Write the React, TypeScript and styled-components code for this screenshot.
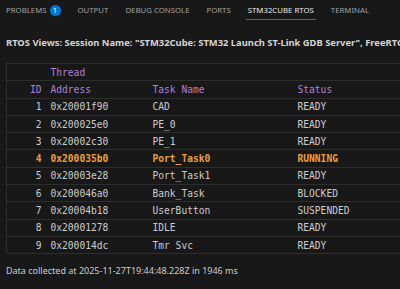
import styled, { createGlobalStyle } from "styled-components";

const GlobalStyle = createGlobalStyle`
  html, body {
    margin: 0;
    padding: 0;
    background: #181818;
  }
`;

type Thread = {
  id: number;
  address: string;
  name: string;
  status: string;
};

const THREADS: Thread[] = [
  { id: 1, address: "0x20001f90", name: "CAD", status: "READY" },
  { id: 2, address: "0x200025e0", name: "PE_0", status: "READY" },
  { id: 3, address: "0x20002c30", name: "PE_1", status: "READY" },
  { id: 4, address: "0x200035b0", name: "Port_Task0", status: "RUNNING" },
  { id: 5, address: "0x20003e28", name: "Port_Task1", status: "READY" },
  { id: 6, address: "0x200046a0", name: "Bank_Task", status: "BLOCKED" },
  { id: 7, address: "0x20004b18", name: "UserButton", status: "SUSPENDED" },
  { id: 8, address: "0x20001278", name: "IDLE", status: "READY" },
  { id: 9, address: "0x200014dc", name: "Tmr Svc", status: "READY" },
];

const TABS = ["PROBLEMS", "OUTPUT", "DEBUG CONSOLE", "PORTS", "STM32CUBE RTOS", "TERMINAL"];

const Panel = styled.div`
  width: 400px;
  height: 289px;
  overflow: hidden;
  background: #181818;
  font-family: "Noto Sans", "Open Sans", sans-serif;
  color: #cccccc;
`;

const TabBar = styled.div`
  display: flex;
  align-items: stretch;
  height: 24px;
  padding-left: 4px;
`;

const Tab = styled.div<{ $active?: boolean }>`
  display: flex;
  flex-shrink: 0;
  align-items: center;
  gap: 3px;
  padding: 0 2px;
  margin-right: 13px;
  font-size: 7.8px;
  white-space: nowrap;
  color: ${p => (p.$active ? "#e7e7e7" : "#a0a0a0")};
  box-shadow: ${p => (p.$active ? "inset 0 -1px 0 #0078d4" : "none")};
  height: 20px;
`;

const Badge = styled.span`
  display: inline-flex;
  align-items: center;
  justify-content: center;
  width: 11px;
  height: 11px;
  border-radius: 50%;
  background: #0078d4;
  color: #ffffff;
  font-size: 7.5px;
`;

const Title = styled.div`
  padding: 12px 0 0 6px;
  height: 14px;
  line-height: 14px;
  font-size: 9.4px;
  font-weight: 700;
  white-space: nowrap;
  color: #d4d4d4;
`;

const Table = styled.table`
  margin: 13px 0 0 6px;
  width: 430px;
  border-collapse: collapse;
  table-layout: fixed;
  font-family: "DejaVu Sans Mono", "Liberation Mono", monospace;
  font-size: 9.6px;
  border: 1px solid #2e2e2e;
`;

const Row = styled.tr<{ $running?: boolean }>`
  height: 17.3px;
  border-bottom: 1px solid #2e2e2e;
  color: ${p => (p.$running ? "#eba13a" : "#cccccc")};
  font-weight: ${p => (p.$running ? 700 : 400)};
`;

const HeadRow = styled(Row)`
  color: #b180d7;
  font-weight: 400;
`;

const Cell = styled.td<{ $right?: boolean }>`
  padding: 0 4px 0 5px;
  text-align: ${p => (p.$right ? "right" : "left")};
  white-space: nowrap;
  overflow: hidden;
`;

const Footer = styled.div`
  padding: 10px 0 0 6px;
  font-size: 9px;
  color: #cccccc;
  white-space: nowrap;
`;

export default function App() {
  return (
    <>
      <GlobalStyle />
      <Panel>
        <TabBar>
          {TABS.map(t => (
            <Tab key={t} $active={t === "STM32CUBE RTOS"}>
              {t}
              {t === "PROBLEMS" && <Badge>1</Badge>}
            </Tab>
          ))}
        </TabBar>
        <Title>
          RTOS Views: Session Name: "STM32Cube: STM32 Launch ST-Link GDB Server", FreeRTOS
        </Title>
        <Table>
          <colgroup>
            <col style={{ width: 39 }} />
            <col style={{ width: 102 }} />
            <col style={{ width: 145 }} />
            <col />
          </colgroup>
          <thead>
            <HeadRow>
              <Cell />
              <Cell colSpan={3}>Thread</Cell>
            </HeadRow>
            <HeadRow>
              <Cell $right>ID</Cell>
              <Cell>Address</Cell>
              <Cell>Task Name</Cell>
              <Cell>Status</Cell>
            </HeadRow>
          </thead>
          <tbody>
            {THREADS.map(t => (
              <Row key={t.id} $running={t.status === "RUNNING"}>
                <Cell $right>{t.id}</Cell>
                <Cell>{t.address}</Cell>
                <Cell>{t.name}</Cell>
                <Cell>{t.status}</Cell>
              </Row>
            ))}
          </tbody>
        </Table>
        <Footer>Data collected at 2025-11-27T19:44:48.228Z in 1946 ms</Footer>
      </Panel>
    </>
  );
}
